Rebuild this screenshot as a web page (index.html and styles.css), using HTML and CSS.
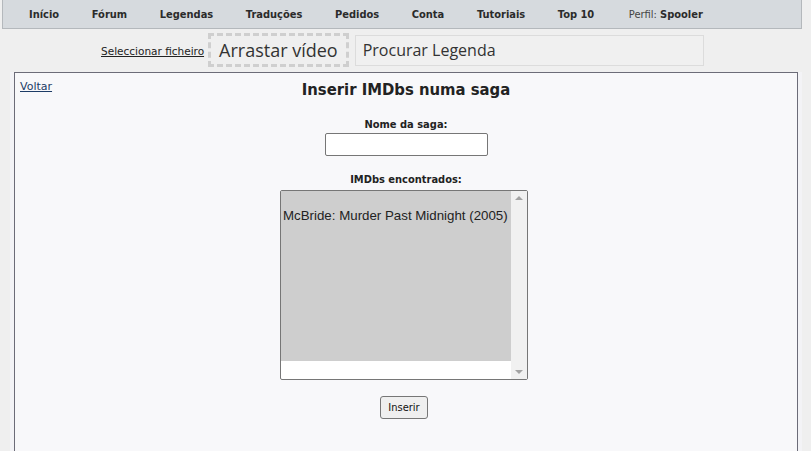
FILE: index.html
```html
<!DOCTYPE html>
<html>
<head>
  <meta charset="utf-8">
  <title>Inserir IMDbs numa saga</title>
  <link rel="stylesheet" href="styles.css">
</head>
<body>
  <div class="menu">
    <a href="#">Início</a>
    <a href="#">Fórum</a>
    <a href="#">Legendas</a>
    <a href="#">Traduções</a>
    <a href="#">Pedidos</a>
    <a href="#">Conta</a>
    <a href="#">Tutoriais</a>
    <a href="#">Top 10</a>
    <span class="perfil">Perfil: <b>Spooler</b></span>
  </div>

  <div class="search">
    <a href="#" class="pick-file">Seleccionar ficheiro</a>
    <div class="dropzone">Arrastar vídeo</div>
    <input type="text" class="search-box" placeholder="Procurar Legenda"/>
  </div>

  <div class="panel">
    <a href="#" class="back">Voltar</a>
    <h1>Inserir IMDbs numa saga</h1>
    <form class="saga-form">
      <label class="field-label" for="saga">Nome da saga:</label>
      <input type="text" id="saga" name="saga" class="textinput"/>

      <label class="field-label found">IMDbs encontrados:</label>
      <div class="listbox">
        <div class="options">
          <div class="option">McBride: Murder Past Midnight (2005)</div>
        </div>
        <div class="scrollbar">
          <span class="arrow up"></span>
          <span class="arrow down"></span>
        </div>
      </div>

      <button type="submit" class="btn">Inserir</button>
    </form>
  </div>
</body>
</html>
```
FILE: styles.css
```css
body {
  margin: 0;
  background: #efefef;
  font-family: "DejaVu Sans Condensed", "DejaVu Sans", Verdana, sans-serif;
  font-stretch: condensed;
  color: #222;
}
a { color: #222 }

/* top menu */
.menu {
  display: flex;
  align-items: center;
  height: 28px;
  margin: 0 9px 0 2px;
  padding-left: 26px;
  background: #d6dade;
  border: 1px solid #b4b8bc;
  border-top: 0;
  font-size: 11px;
  font-weight: bold;
}
.menu a { text-decoration: none; margin-right: 32.6px; color: #2b2b2b }
.perfil { font-weight: normal; color: #444; margin-left: 2px }
.perfil b { color: #2b2b2b }

/* search row */
.search {
  display: flex;
  align-items: center;
  height: 38px;
  padding-left: 101px;
  margin-top: 2px;
}
.pick-file {
  font-family: "DejaVu Sans", Verdana, sans-serif;
  font-stretch: normal;
  font-size: 10.5px;
  margin-right: 4px;
  margin-top: 2px;
}
.dropzone {
  border: 3px dashed #cfcfcf;
  padding: 2px 8px;
  font-family: "Open Sans", sans-serif;
  font-stretch: normal;
  font-size: 18px;
  line-height: 24px;
  color: #333;
}
.search-box {
  margin-left: 6px;
  width: 349px;
  height: 31px;
  box-sizing: border-box;
  padding: 0 7px;
  border: 1px solid #dcdcdc;
  background: #f0f0f0;
  font-family: "Open Sans", sans-serif;
  font-stretch: normal;
  font-size: 16px;
  color: #333;
}
.search-box::placeholder { color: #333 }

/* main panel */
.panel {
  margin: 3px 13px 0 14px;
  height: 400px;
  background: #f8f8fa;
  border: 1px solid #6c6c78;
  box-shadow: -4px 0 0 #f3f3f6, 4px 0 0 #f3f3f6;
  position: relative;
}
.back {
  position: absolute;
  left: 5px;
  top: 7px;
  font-family: "DejaVu Sans", Verdana, sans-serif;
  font-stretch: normal;
  font-size: 11px;
  color: #1d3c66;
}
h1 {
  margin: 7px 0 0;
  text-align: center;
  font-size: 16.5px;
  line-height: 20px;
}
.saga-form {
  display: flex;
  flex-direction: column;
  align-items: center;
}
.field-label { font-size: 11px; font-weight: bold; margin-top: 18px; line-height: 14px }
.field-label.found { margin-top: 17px }
.textinput {
  width: 163px;
  height: 23px;
  box-sizing: border-box;
  margin-top: 1px;
  border: 1px solid #767676;
  border-radius: 2px;
  background: #fff;
}
.found + .listbox { margin-top: 3px }

/* list of found IMDbs */
.listbox {
  display: flex;
  width: 248px;
  height: 190px;
  box-sizing: border-box;
  margin-left: -4px;
  border: 1px solid #767676;
  border-radius: 2px;
  background: #fff;
}
.options { flex: 1 }
.option {
  height: 146px;
  padding: 17px 2px 7px;
  background: #cecece;
  font-family: "Liberation Sans", Arial, sans-serif;
  font-stretch: normal;
  font-size: 13.3px;
  color: #222;
  white-space: nowrap;
}
.scrollbar {
  width: 16px;
  background: #f1f1f1;
  display: flex;
  flex-direction: column;
  justify-content: space-between;
  align-items: center;
  padding: 5px 0;
}
.arrow { width: 0; height: 0; border-left: 4px solid transparent; border-right: 4px solid transparent }
.arrow.up { border-bottom: 4px solid #a3a3a3 }
.arrow.down { border-top: 4px solid #a3a3a3 }

.btn {
  margin-top: 16px;
  margin-left: -4px;
  height: 23px;
  padding: 0 7px;
  font-family: inherit;
  font-size: 11px;
  background: #efefef;
  border: 1px solid #767676;
  border-radius: 3px;
  color: #111;
}
```
